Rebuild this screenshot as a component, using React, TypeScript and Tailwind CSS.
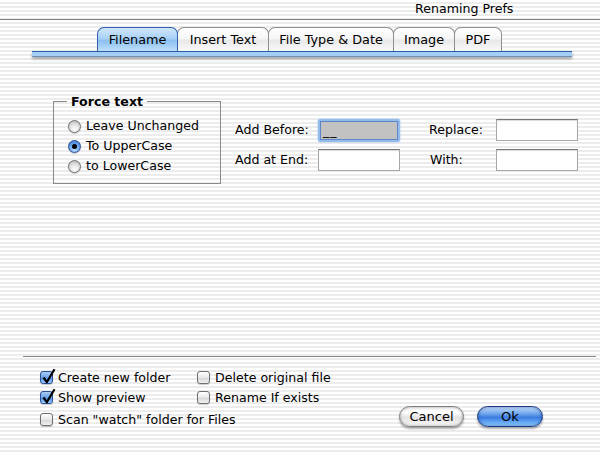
import clsx from "clsx";

const pin =
  "bg-[repeating-linear-gradient(180deg,#ffffff_0px,#ffffff_2px,#ececec_2px,#ececec_4px)]";

function Tab({ label, active, className }: { label: string; active?: boolean; className: string }) {
  return (
    <div
      className={clsx(
        "h-[24px] -mr-px flex items-center justify-center rounded-t-[7px] border border-b-0 text-[12.8px] text-black",
        active
          ? "border-[#2f5fae] bg-[linear-gradient(180deg,#cfe6fb_0%,#a9d1f6_45%,#8cc0f1_55%,#bfe0fa_100%)] z-10"
          : "border-[#8f8f8f] bg-[linear-gradient(180deg,#ffffff_0%,#f6f6f6_45%,#e8e8e8_55%,#fafafa_100%)]",
        className,
      )}
    >
      {label}
    </div>
  );
}

function Radio({ label, checked }: { label: string; checked?: boolean }) {
  return (
    <div className="h-[20px] flex items-center gap-[5px]">
      <span
        className={clsx(
          "w-[13px] h-[13px] rounded-full border flex items-center justify-center shadow-[0_1px_1px_rgba(0,0,0,0.2)]",
          checked
            ? "border-[#2a4f93] bg-[radial-gradient(circle_at_50%_75%,#bfe0ff_0%,#5d9ae6_60%,#3a6fc6_100%)]"
            : "border-[#6f6f6f] bg-[radial-gradient(circle_at_50%_75%,#ffffff_0%,#dedede_55%,#a9a9a9_100%)]",
        )}
      >
        {checked && <span className="w-[5px] h-[5px] rounded-full bg-black" />}
      </span>
      <span>{label}</span>
    </div>
  );
}

function Check({ label, checked, className }: { label: string; checked?: boolean; className?: string }) {
  return (
    <div className={clsx("flex items-center gap-[5px]", className)}>
      <span
        className={clsx(
          "relative w-[13px] h-[13px] rounded-[3px] border shadow-[0_1px_1px_rgba(0,0,0,0.2)]",
          checked
            ? "border-[#2a4f93] bg-[linear-gradient(180deg,#a9cdf5_0%,#6aa4ea_50%,#4d8ce3_55%,#9fd0fb_100%)]"
            : "border-[#6f6f6f] bg-[linear-gradient(180deg,#ffffff_0%,#e8e8e8_50%,#d6d6d6_55%,#f2f2f2_100%)]",
        )}
      >
        {checked && (
          <svg className="absolute left-[1px] -top-[4px]" width="14" height="16" viewBox="0 0 14 16">
            <path d="M1.5 9.5 L4.8 14.2 L12.5 1.2" fill="none" stroke="#000" strokeWidth="2.2" strokeLinejoin="round" />
          </svg>
        )}
      </span>
      <span>{label}</span>
    </div>
  );
}

function Field({ className }: { className?: string }) {
  return (
    <div
      className={clsx(
        "w-[82px] h-[22px] bg-white border border-[#a8a8a8] border-t-[#777777] shadow-[inset_0_1px_1px_rgba(0,0,0,0.15)]",
        className,
      )}
    />
  );
}

export default function App() {
  return (
    <div
      className={clsx(
        "w-[600px] h-[452px] overflow-hidden flex flex-col text-[12.6px] text-black font-['DejaVu_Sans',sans-serif]",
        pin,
      )}
    >
      {/* title bar */}
      <div className="h-[20px] border-b border-[#7b7b7b] flex items-center pl-[415px] text-[12.6px] leading-none">
        Renaming Prefs
      </div>

      {/* tabs */}
      <div className="mt-[7px] pl-[97px] flex items-end">
        <Tab label="Filename" active className="w-[81px]" />
        <Tab label="Insert Text" className="w-[92px]" />
        <Tab label="File Type & Date" className="w-[126px]" />
        <Tab label="Image" className="w-[62px]" />
        <Tab label="PDF" className="w-[48px]" />
      </div>
      <div className="ml-[32px] w-[540px] h-[6px] border-t border-[#2c5ba9] bg-[#a3cff7] border-b border-b-[#6f8fb8] shadow-[0_2px_3px_rgba(0,0,0,0.35)]" />

      {/* content */}
      <div className="h-[299px] flex items-start">
        <fieldset className="ml-[53px] mt-[37px] w-[168px] h-[90px] border border-[#8a8a8a] px-0 pl-[14px]">
          <legend className="ml-[-1px] px-[4px] font-bold leading-[15px]">Force text</legend>
          <div className="pt-[7px] flex flex-col">
            <Radio label="Leave Unchanged" />
            <Radio label="To UpperCase" checked />
            <Radio label="to LowerCase" />
          </div>
        </fieldset>

        <div className="ml-[14px] mt-[62px] grid grid-cols-[83px_82px_29px_67px_82px] grid-rows-[22px_22px] gap-y-[8px] items-center">
          <span>Add Before:</span>
          <div className="w-[82px] h-[23px] rounded-[2px] border-[2px] border-[#94bbea] shadow-[0_0_2px_#8fb6e8]">
            <div className="h-full border border-[#5b86c7] bg-[#c2c2c2] pl-[2px] leading-[17px] tracking-[1px]">__</div>
          </div>
          <span />
          <span>Replace:</span>
          <Field />
          <span>Add at End:</span>
          <Field />
          <span />
          <span className="pl-[1px]">With:</span>
          <Field />
        </div>
      </div>

      {/* separator */}
      <div className="ml-[23px] mr-[4px] h-px bg-[#8a8a8a]" />

      {/* bottom */}
      <div className="flex items-start">
        <div className="ml-[40px] mt-[11px] grid grid-cols-[157px_auto] grid-rows-[20px_20px_24px] items-center">
          <Check label="Create new folder" checked />
          <Check label="Delete original file" />
          <Check label="Show preview" checked />
          <Check label="Rename If exists" />
          <Check label='Scan "watch" folder for Files' className="col-span-2" />
        </div>
        <div className="ml-auto mr-[57px] mt-[49px] flex gap-[13px]">
          <button className="w-[65px] h-[21px] rounded-full border border-[#7d7d7d] bg-[linear-gradient(180deg,#f4f4f4_0%,#ffffff_30%,#e4e4e4_55%,#f7f7f7_100%)] shadow-[0_2px_2px_rgba(0,0,0,0.3),inset_0_0_3px_rgba(0,0,0,0.35)] text-[13px] leading-none">
            Cancel
          </button>
          <button className="w-[66px] h-[21px] rounded-full border border-[#1f3c86] bg-[linear-gradient(180deg,#c3dcfa_0%,#6fa6ec_35%,#3c7be0_55%,#6cb0f7_85%,#9bd0fd_100%)] shadow-[0_2px_2px_rgba(0,0,0,0.3),inset_0_0_3px_rgba(10,40,110,0.6)] text-[13px] leading-none">
            Ok
          </button>
        </div>
      </div>
    </div>
  );
}
